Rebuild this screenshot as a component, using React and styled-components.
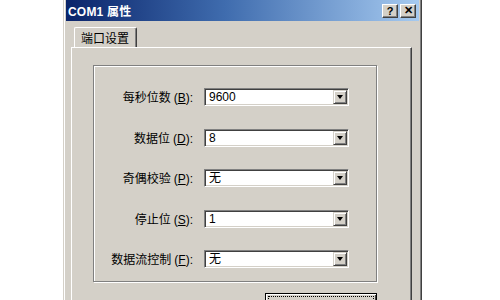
import React from 'react';
import styled, { createGlobalStyle } from 'styled-components';

const Global = createGlobalStyle`
  html, body { margin: 0; background: #fff; overflow: hidden; }
  body { width: 500px; height: 300px; font-family: "Noto Sans CJK SC", "Liberation Sans", sans-serif; }
`;

const Page = styled.div`
  width: 500px;
  height: 300px;
  padding-left: 63px;
  box-sizing: border-box;
  overflow: hidden;
`;

const Window = styled.div`
  width: 359px;
  height: 320px;
  margin-top: -2px;
  background: #d4d0c8;
  border-left: 1px solid #d4d0c8;
  border-top: 1px solid #d4d0c8;
  border-right: 1px solid #404040;
  box-shadow: inset 1px 1px 0 #fff, inset -1px 0 0 #808080;
  box-sizing: border-box;
  padding: 1px 2px 0 2px;
`;

const TitleBar = styled.div`
  height: 21px;
  display: flex;
  align-items: center;
  justify-content: space-between;
  padding: 0 3px 0 2px;
  background: linear-gradient(to right, #0a246a 0%, #3f6cae 45%, #a6caf0 100%);
`;

const Title = styled.span`
  color: #fff;
  font-family: "Liberation Sans", "Noto Sans CJK SC", sans-serif;
  font-weight: bold;
  font-size: 12px;
  letter-spacing: 0.2px;
`;

const Caps = styled.div`
  display: flex;
  gap: 2px;
`;

const CapButton = styled.div`
  width: 16px;
  height: 14px;
  box-sizing: border-box;
  background: #d4d0c8;
  border: 1px solid;
  border-color: #fff #404040 #404040 #fff;
  box-shadow: inset -1px -1px 0 #808080;
  display: flex;
  align-items: center;
  justify-content: center;
  font-family: "Liberation Sans", sans-serif;
  font-weight: bold;
  font-size: 11px;
  color: #000;
`;

const Body = styled.div`
  padding: 6px 7px 0 5px;
`;

const TabStrip = styled.div`
  display: flex;
  padding-left: 3px;
  height: 20px;
`;

const Tab = styled.div`
  height: 20px;
  box-sizing: border-box;
  padding: 0 7px 0 6px;
  display: flex;
  align-items: center;
  font-size: 12px;
  color: #000;
  border-left: 1px solid #fff;
  border-top: 1px solid #fff;
  border-right: 1px solid #404040;
  box-shadow: inset -1px 0 0 #808080;
  border-radius: 2px 2px 0 0;
  background: #d4d0c8;
  position: relative;
  z-index: 1;
`;

const Panel = styled.div`
  height: 260px;
  box-sizing: border-box;
  border-left: 1px solid #fff;
  border-top: 1px solid #fff;
  border-right: 1px solid #404040;
  box-shadow: inset -1px 0 0 #808080;
  padding: 17px 34px 0 21px;
`;

const Group = styled.div`
  height: 217px;
  box-sizing: border-box;
  border: 1px solid #808080;
  box-shadow: inset 1px 1px 0 #fff, 1px 1px 0 #fff;
  display: grid;
  grid-template-columns: 99px 145px;
  column-gap: 10px;
  row-gap: 21.5px;
  align-content: start;
  padding: 22px 0 0 1px;
`;

const Label = styled.label`
  font-size: 12px;
  color: #000;
  text-align: right;
  line-height: 18px;
  white-space: nowrap;
  padding-right: 1px;
`;

const Mnemonic = styled.span`
  font-family: "Liberation Sans", sans-serif;
  margin-left: 3px;
`;

const Key = styled.span`
  text-decoration: underline;
`;

const Combo = styled.div`
  height: 18px;
  box-sizing: border-box;
  background: #fff;
  border: 1px solid;
  border-color: #808080 #fff #fff #808080;
  box-shadow: inset 1px 1px 0 #404040, inset -1px -1px 0 #d4d0c8;
  display: flex;
  align-items: center;
  padding: 1px 1px 1px 2px;
`;

const Value = styled.span`
  flex: 1;
  font-size: 12px;
  font-family: "Liberation Sans", "Noto Sans CJK SC", sans-serif;
  color: #000;
  padding-left: 2px;
  line-height: 14px;
`;

const Drop = styled.div`
  width: 14px;
  height: 14px;
  box-sizing: border-box;
  background: #d4d0c8;
  border: 1px solid;
  border-color: #d4d0c8 #404040 #404040 #d4d0c8;
  box-shadow: inset 1px 1px 0 #fff, inset -1px -1px 0 #808080;
  display: flex;
  align-items: center;
  justify-content: center;
`;

const Arrow = styled.div`
  width: 0;
  height: 0;
  border-left: 3.5px solid transparent;
  border-right: 3.5px solid transparent;
  border-top: 4px solid #000;
`;

const Footer = styled.div`
  display: flex;
  justify-content: flex-end;
  padding-top: 11px;
`;

const Button = styled.div`
  width: 112px;
  height: 23px;
  box-sizing: border-box;
  border: 1px solid #000;
  box-shadow: inset 1px 1px 0 #fff, inset -1px -1px 0 #404040;
  outline: 1px dotted #000;
  outline-offset: -4px;
`;

const fields = [
  { label: '每秒位数', key: 'B', value: '9600' },
  { label: '数据位', key: 'D', value: '8' },
  { label: '奇偶校验', key: 'P', value: '无' },
  { label: '停止位', key: 'S', value: '1' },
  { label: '数据流控制', key: 'F', value: '无' },
];

function App() {
  return (
    <Page>
      <Global />
      <Window>
        <TitleBar>
          <Title>COM1 属性</Title>
          <Caps>
            <CapButton>?</CapButton>
            <CapButton>✕</CapButton>
          </Caps>
        </TitleBar>
        <Body>
          <TabStrip>
            <Tab>端口设置</Tab>
          </TabStrip>
          <Panel>
            <Group>
              {fields.map((f) => (
                <React.Fragment key={f.key + f.label}>
                  <Label>
                    {f.label}
                    <Mnemonic>(<Key>{f.key}</Key>):</Mnemonic>
                  </Label>
                  <Combo>
                    <Value>{f.value}</Value>
                    <Drop><Arrow /></Drop>
                  </Combo>
                </React.Fragment>
              ))}
            </Group>
            <Footer>
              <Button />
            </Footer>
          </Panel>
        </Body>
      </Window>
    </Page>
  );
}

export default App;
